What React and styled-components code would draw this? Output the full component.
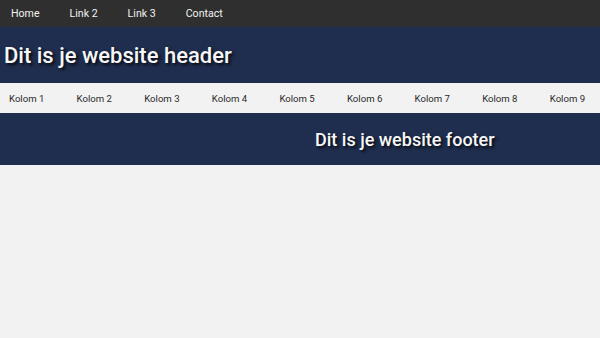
import React from 'react';
import styled, { createGlobalStyle } from 'styled-components';

const GlobalStyle = createGlobalStyle`
  html, body {
    margin: 0;
    padding: 0;
    background: #f2f2f2;
    font-family: Roboto, "Liberation Sans", sans-serif;
  }
`;

const Page = styled.div`
  width: 600px;
  min-height: 338px;
  background: #f2f2f2;
  overflow: hidden;
`;

const Nav = styled.nav`
  display: flex;
  height: 27px;
  align-items: center;
  background: #2f2f2f;
  padding-left: 11px;
  gap: 30px;
`;

const NavLink = styled.a`
  color: #f2f2f2;
  font-size: 10.6px;
  text-decoration: none;
`;

const Header = styled.header`
  height: 56px;
  display: flex;
  align-items: center;
  padding-left: 4px;
  background: #1f2d4e;

  h1 {
    margin: 0;
    color: #f7f7f7;
    font-size: 22px;
    font-weight: 500;
    text-shadow: 2px 2px 3px rgba(0, 0, 0, 0.8);
  }
`;

const Columns = styled.div`
  display: grid;
  grid-template-columns: repeat(9, 67.6px);
  height: 30px;
  align-items: center;
  background: #f2f2f2;
`;

const Column = styled.div`
  padding-left: 9px;
  font-size: 9.6px;
  color: #2a2a2a;
  white-space: nowrap;
`;

const Footer = styled.footer`
  height: 52px;
  display: flex;
  align-items: center;
  padding-left: 315px;
  background: #1f2d4e;

  h2 {
    margin: 0;
    color: #f7f7f7;
    font-size: 18px;
    font-weight: 500;
    text-shadow: 2px 2px 3px rgba(0, 0, 0, 0.8);
  }
`;

const links = ['Home', 'Link 2', 'Link 3', 'Contact'];
const columns = Array.from({ length: 9 }, (_, i) => `Kolom ${i + 1}`);

export default function App() {
  return (
    <Page>
      <GlobalStyle />
      <Nav>
        {links.map((l) => (
          <NavLink key={l} href="#">{l}</NavLink>
        ))}
      </Nav>
      <Header>
        <h1>Dit is je website header</h1>
      </Header>
      <Columns>
        {columns.map((c) => (
          <Column key={c}>{c}</Column>
        ))}
      </Columns>
      <Footer>
        <h2>Dit is je website footer</h2>
      </Footer>
    </Page>
  );
}
